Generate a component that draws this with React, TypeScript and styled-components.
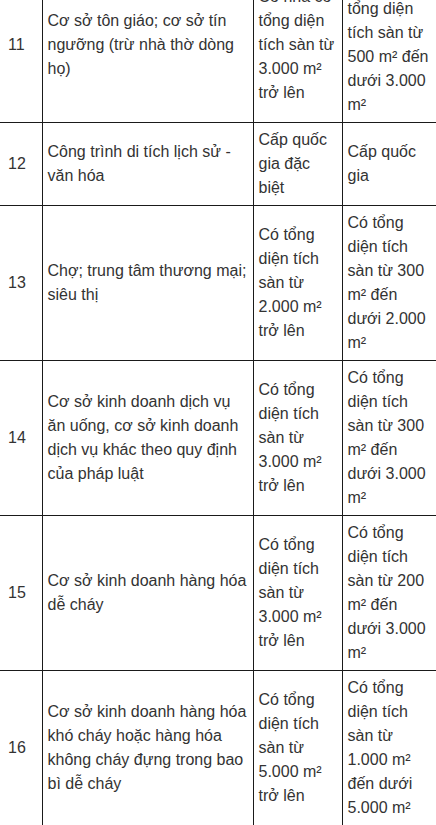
import React from 'react'
import styled, { createGlobalStyle } from 'styled-components'

const GlobalStyle = createGlobalStyle`
  html, body {
    margin: 0;
    padding: 0;
    background: #ffffff;
    overflow: hidden;
  }
  body {
    font-family: "Liberation Sans", Arial, sans-serif;
  }
`

const Page = styled.div`
  width: 436px;
  height: 825px;
  overflow: hidden;
`

// the table is scrolled: row 11 starts above the top edge
const Table = styled.table`
  width: 436px;
  margin-top: -32px;
  border-collapse: collapse;
  table-layout: fixed;
  color: #333333;
  font-size: 16px;
  line-height: 24px;
`

const Col = styled.col<{ $w: number }>`
  width: ${(p) => p.$w}px;
`

const Row = styled.tr`
  border-bottom: 1px solid #1a1a1a;
`

const Cell = styled.td<{ $first?: boolean }>`
  vertical-align: middle;
  padding: 5px 5px 5px ${(p) => (p.$first ? '8px' : '5px')};
  border-left: ${(p) => (p.$first ? 'none' : '1px solid #1a1a1a')};
  border-right: none;
  word-wrap: break-word;
`

interface Item {
  no: number
  name: string
  special: string
  national: string
}

const items: Item[] = [
  {
    no: 11,
    name: 'Cơ sở tôn giáo; cơ sở tín ngưỡng (trừ nhà thờ dòng họ)',
    special: 'Có nhà có tổng diện tích sàn từ 3.000 m² trở lên',
    national: 'Có nhà có tổng diện tích sàn từ 500 m² đến dưới 3.000 m²',
  },
  {
    no: 12,
    name: 'Công trình di tích lịch sử - văn hóa',
    special: 'Cấp quốc gia đặc biệt',
    national: 'Cấp quốc gia',
  },
  {
    no: 13,
    name: 'Chợ; trung tâm thương mại; siêu thị',
    special: 'Có tổng diện tích sàn từ 2.000 m² trở lên',
    national: 'Có tổng diện tích sàn từ 300 m² đến dưới 2.000 m²',
  },
  {
    no: 14,
    name: 'Cơ sở kinh doanh dịch vụ ăn uống, cơ sở kinh doanh dịch vụ khác theo quy định của pháp luật',
    special: 'Có tổng diện tích sàn từ 3.000 m² trở lên',
    national: 'Có tổng diện tích sàn từ 300 m² đến dưới 3.000 m²',
  },
  {
    no: 15,
    name: 'Cơ sở kinh doanh hàng hóa dễ cháy',
    special: 'Có tổng diện tích sàn từ 3.000 m² trở lên',
    national: 'Có tổng diện tích sàn từ 200 m² đến dưới 3.000 m²',
  },
  {
    no: 16,
    name: 'Cơ sở kinh doanh hàng hóa khó cháy hoặc hàng hóa không cháy đựng trong bao bì dễ cháy',
    special: 'Có tổng diện tích sàn từ 5.000 m² trở lên',
    national: 'Có tổng diện tích sàn từ 1.000 m² đến dưới 5.000 m²',
  },
]

export default function App() {
  return (
    <Page>
      <GlobalStyle />
      <Table>
        <colgroup>
          <Col $w={42} />
          <Col $w={211} />
          <Col $w={89} />
          <Col $w={94} />
        </colgroup>
        <tbody>
          {items.map((item) => (
            <Row key={item.no}>
              <Cell $first>{item.no}</Cell>
              <Cell>{item.name}</Cell>
              <Cell>{item.special}</Cell>
              <Cell>{item.national}</Cell>
            </Row>
          ))}
        </tbody>
      </Table>
    </Page>
  )
}
